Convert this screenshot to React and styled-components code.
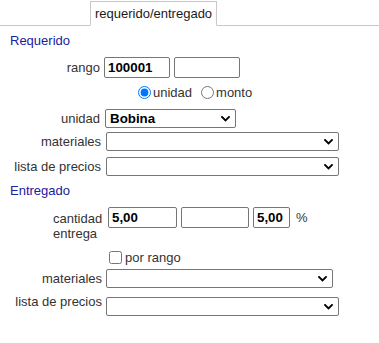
import React from 'react';
import styled, { createGlobalStyle } from 'styled-components';

const Global = createGlobalStyle`
  html, body { margin: 0; padding: 0; background: #fff; }
  body {
    font-family: "Liberation Sans", Arial, sans-serif;
    font-size: 13px;
    line-height: 15px;
    color: #333;
  }
  * { box-sizing: border-box; }
`;

const Page = styled.div`
  width: 379px;
  height: 343px;
  overflow: hidden;
  background: #fff;
`;

const TabBar = styled.div`
  display: flex;
  align-items: flex-end;
  height: 26px;
  padding-left: 90px;
  border-bottom: 1px solid #c8c8c8;
`;

const Tab = styled.div`
  height: 25px;
  margin-bottom: -1px;
  padding: 4px 4px 0 4px;
  border: 1px solid #c8c8c8;
  border-bottom: 1px solid #fff;
  background: #fff;
  color: #1a1a1a;
  white-space: nowrap;
`;

const Heading = styled.div`
  margin-top: ${p => p.$top}px;
  padding-left: 10px;
  color: #2020a0;
  height: 15px;
`;

const Row = styled.div`
  display: grid;
  grid-template-columns: ${p => p.$label}px 1fr;
  column-gap: 3px;
  align-items: ${p => p.$align || 'center'};
  margin-top: ${p => p.$top}px;
`;

const Label = styled.div`
  text-align: right;
  padding-right: ${p => p.$pr || 0}px;
  padding-top: ${p => p.$pt || 0}px;
  white-space: nowrap;
`;

const WrapLabel = styled.div`
  display: flex;
  justify-content: flex-end;
  padding-top: 4px;
`;

const WrapText = styled.span`
  display: block;
  width: 52px;
  text-align: left;
  white-space: normal;
`;

const Controls = styled.div`
  display: flex;
  align-items: center;
  gap: 4px;
  margin-left: ${p => p.$ml || 0}px;
  margin-top: ${p => p.$mt || 0}px;
`;

const TextInput = styled.input`
  width: ${p => p.$w}px;
  height: 21px;
  margin: 0;
  padding: 1px 3px;
  border: 1px solid #767676;
  border-radius: 2px;
  font-family: "Liberation Sans", Arial, sans-serif;
  font-size: 13.33px;
  font-weight: bold;
  color: #000;
  background: #fff;
  outline: none;
`;

const Percent = styled.span`
  margin-left: 2px;
  color: #333;
`;

const OptionLine = styled.div`
  display: flex;
  align-items: center;
  height: 17px;
  margin-top: ${p => p.$top}px;
  padding-left: ${p => p.$left}px;
`;

const Choice = styled.label`
  display: flex;
  align-items: center;
  margin-right: ${p => p.$mr || 0}px;
  color: #333;
`;

const Radio = styled.input.attrs({ type: 'radio' })`
  width: 13px;
  height: 13px;
  margin: 0 2px 0 0;
  accent-color: #0075ff;
`;

const Check = styled.input.attrs({ type: 'checkbox' })`
  width: 13px;
  height: 13px;
  margin: 0 3px 0 0;
`;

const SelectBox = styled.div`
  position: relative;
  width: ${p => p.$w}px;
  height: 19px;
  margin-left: ${p => p.$ml || 0}px;
  margin-top: ${p => p.$mt || 0}px;
`;

const NativeSelect = styled.select`
  appearance: none;
  -webkit-appearance: none;
  display: block;
  width: 100%;
  height: 100%;
  margin: 0;
  padding: 0 18px 0 4px;
  border: 1px solid #767676;
  border-radius: 2px;
  background: #fff;
  font-family: "Liberation Sans", Arial, sans-serif;
  font-size: 13.33px;
  font-weight: bold;
  color: #000;
  outline: none;
`;

const Chevron = styled.svg`
  position: absolute;
  right: 6px;
  top: 50%;
  width: 9px;
  height: 6px;
  margin-top: -3px;
  pointer-events: none;
`;

function Select({ w, ml, mt, value }) {
  return (
    <SelectBox $w={w} $ml={ml} $mt={mt}>
      <NativeSelect defaultValue={value || ''}>
        <option value={value || ''}>{value || ''}</option>
      </NativeSelect>
      <Chevron viewBox="0 0 9 6">
        <path d="M1 1 L4.5 4.5 L8 1" fill="none" stroke="#000" strokeWidth="1.9" strokeLinecap="square" />
      </Chevron>
    </SelectBox>
  );
}

export default function App() {
  return (
    <Page>
      <Global />
      <TabBar>
        <Tab>requerido/entregado</Tab>
      </TabBar>

      <Heading $top={7}>Requerido</Heading>

      <Row $label={101} $top={9}>
        <Label $pr={1}>rango</Label>
        <Controls>
          <TextInput $w={66} defaultValue="100001" />
          <TextInput $w={66} defaultValue="" />
        </Controls>
      </Row>

      <OptionLine $top={6} $left={138}>
        <Choice $mr={9}>
          <Radio name="tipo" defaultChecked />
          unidad
        </Choice>
        <Choice>
          <Radio name="tipo" />
          monto
        </Choice>
      </OptionLine>

      <Row $label={101} $top={8}>
        <Label $pr={1}>unidad</Label>
        <Select w={131} ml={1} value="Bobina" />
      </Row>

      <Row $label={101} $top={4}>
        <Label>materiales</Label>
        <Select w={233} ml={2} />
      </Row>

      <Row $label={101} $top={6}>
        <Label>lista de precios</Label>
        <Select w={233} ml={2} />
      </Row>

      <Heading $top={7}>Entregado</Heading>

      <Row $label={105} $top={9} $align="start">
        <WrapLabel>
          <WrapText>cantidad entrega</WrapText>
        </WrapLabel>
        <Controls>
          <TextInput $w={69} defaultValue="5,00" />
          <TextInput $w={68} defaultValue="" />
          <TextInput $w={37} defaultValue="5,00" />
          <Percent>%</Percent>
        </Controls>
      </Row>

      <OptionLine $top={8} $left={109}>
        <Choice>
          <Check />
          por rango
        </Choice>
      </OptionLine>

      <Row $label={102} $top={3}>
        <Label>materiales</Label>
        <Select w={227} ml={1} />
      </Row>

      <Row $label={102} $top={6} $align="start">
        <Label>lista de precios</Label>
        <Select w={233} ml={1} mt={3} />
      </Row>
    </Page>
  );
}
